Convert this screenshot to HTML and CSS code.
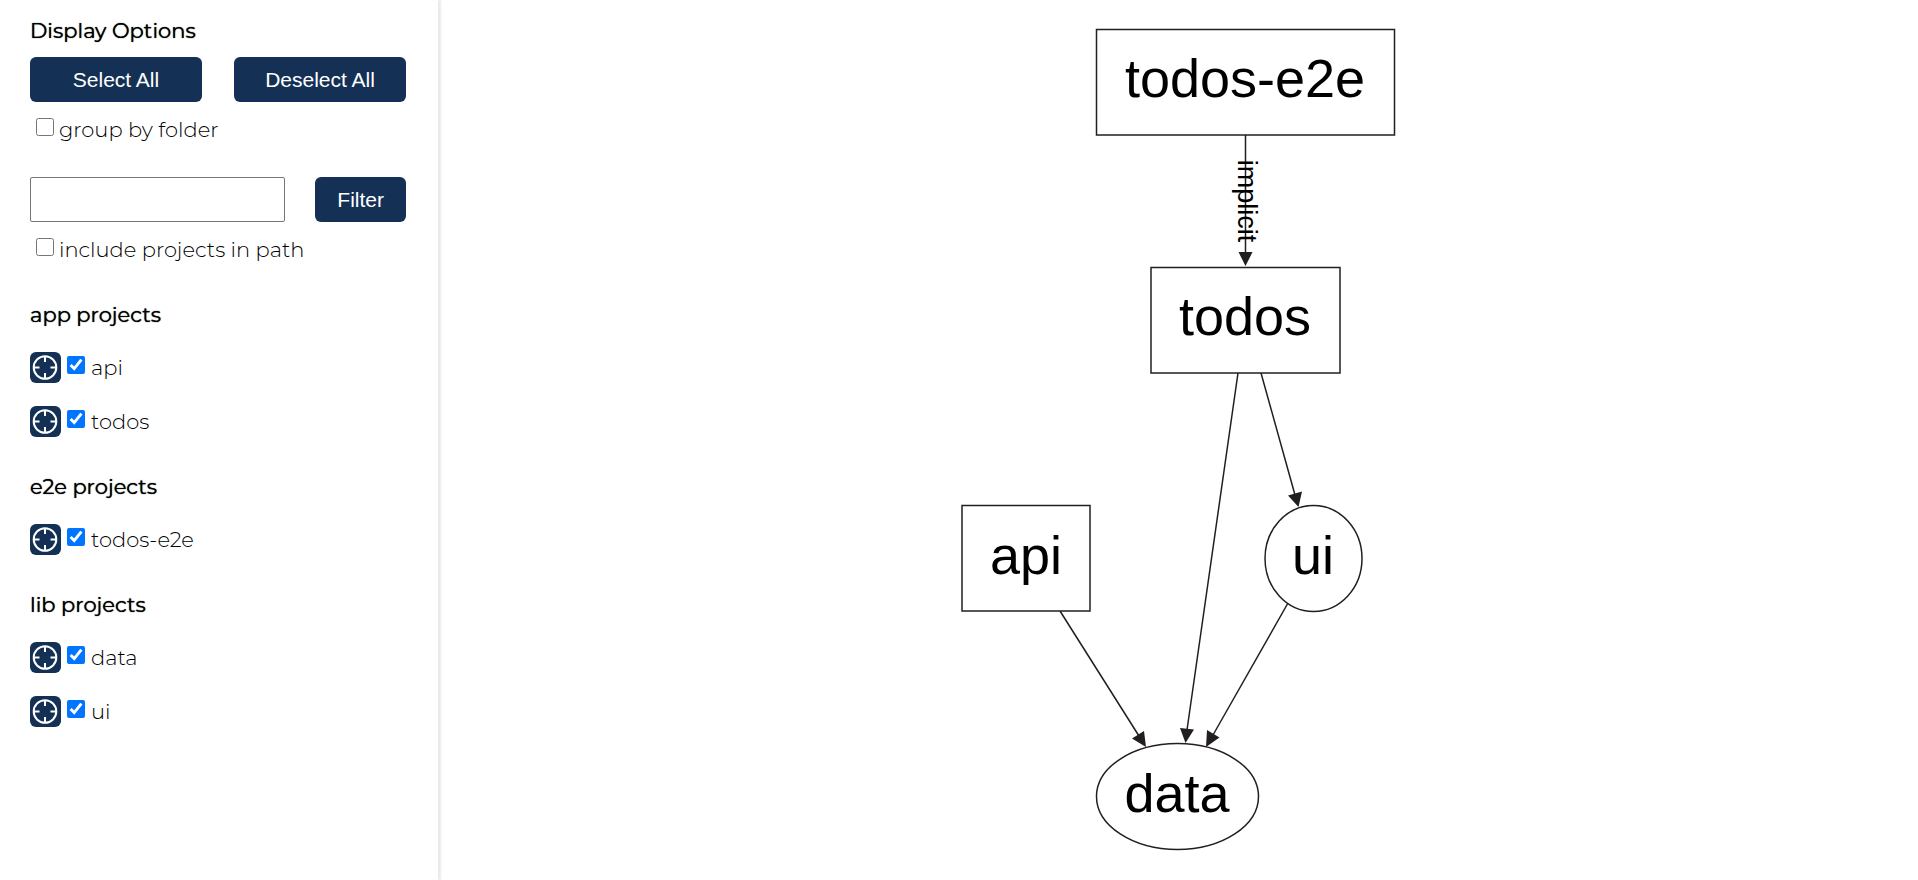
FILE: index.html
```html
<!DOCTYPE html>
<html lang="en">
<head>
<meta charset="utf-8">
<title>Project graph</title>
<link rel="stylesheet" href="styles.css">
</head>
<body>
<svg class="symbols" aria-hidden="true">
  <symbol id="focus" viewBox="0 0 31 31">
    <g fill="none" stroke="#fff" stroke-width="2">
      <circle cx="15" cy="15.5" r="11.3"/>
      <path d="M15 4v6M15 21v6M3.500 15.500h6M20.500 15.500h6"/>
    </g>
  </symbol>
</svg>
<div class="app">
  <aside class="sidebar">
    <section class="options">
      <h2 class="heading">Display Options</h2>
      <div class="button-row">
        <button class="button wide" type="button">Select All</button>
        <button class="button wide" type="button">Deselect All</button>
      </div>
      <label class="option"><input class="check" type="checkbox">group by folder</label>
    </section>
    <form class="filter">
      <div class="filter-row">
        <input class="filter-text" type="text" aria-label="Filter projects">
        <button class="button" type="button">Filter</button>
      </div>
      <label class="option"><input class="check" type="checkbox">include projects in path</label>
    </form>
    <section class="group">
      <h2 class="heading">app projects</h2>
      <ul class="projects">
        <li class="project"><button class="focus" type="button" aria-label="Focus api"><svg class="icon"><use href="#focus"/></svg></button><label class="name"><input class="check" type="checkbox" checked>api</label></li>
        <li class="project"><button class="focus" type="button" aria-label="Focus todos"><svg class="icon"><use href="#focus"/></svg></button><label class="name"><input class="check" type="checkbox" checked>todos</label></li>
      </ul>
    </section>
    <section class="group">
      <h2 class="heading">e2e projects</h2>
      <ul class="projects">
        <li class="project"><button class="focus" type="button" aria-label="Focus todos-e2e"><svg class="icon"><use href="#focus"/></svg></button><label class="name"><input class="check" type="checkbox" checked>todos-e2e</label></li>
      </ul>
    </section>
    <section class="group">
      <h2 class="heading">lib projects</h2>
      <ul class="projects">
        <li class="project"><button class="focus" type="button" aria-label="Focus data"><svg class="icon"><use href="#focus"/></svg></button><label class="name"><input class="check" type="checkbox" checked>data</label></li>
        <li class="project"><button class="focus" type="button" aria-label="Focus ui"><svg class="icon"><use href="#focus"/></svg></button><label class="name"><input class="check" type="checkbox" checked>ui</label></li>
      </ul>
    </section>
  </aside>
  <main class="canvas">
    <svg class="graph" viewBox="438 0 1480 880" role="img" aria-label="Dependency graph">
      <g class="edges">
        <path d="M1245.500 135V254M1238 373L1187 730M1261 373L1295 495M1060 611L1139 736M1288 603L1213 735"/>
      </g>
      <g class="arrows">
        <path d="M1238.500 252h14L1245.500 266zM1180 728L1194 729.500L1185.500 743zM1288 495.500L1302 491.500L1298.500 507zM1132 738.500L1144 731L1146 747zM1207 730L1219.500 737.500L1206 747z"/>
      </g>
      <g class="nodes">
        <rect x="1096.500" y="29.500" width="298" height="105.500"/>
        <rect x="1151" y="267.500" width="189" height="105.500"/>
        <rect x="962" y="505.500" width="128" height="105.500"/>
        <ellipse cx="1313.500" cy="558.500" rx="48.500" ry="53"/>
        <ellipse cx="1177.500" cy="796.500" rx="81" ry="53"/>
      </g>
      <g class="labels">
        <text x="1245" y="97">todos-e2e</text>
        <text x="1245" y="335">todos</text>
        <text x="1026" y="574">api</text>
        <text x="1313" y="574">ui</text>
        <text x="1177" y="812">data</text>
      </g>
      <text class="edge-label" transform="translate(1238 201) rotate(90)">implicit</text>
    </svg>
  </main>
</div>
</body>
</html>
```
FILE: styles.css
```css
* { box-sizing: border-box; }

body {
  margin: 0;
  background: #fff;
  color: #000;
  font-family: Montserrat, Inter, sans-serif;
  font-size: 21px;
  font-weight: 300;
  line-height: 24px;
}

.symbols { display: none; }

.app {
  display: flex;
  min-height: 100vh;
}

.sidebar {
  flex: none;
  width: 438px;
  padding: 19px 32px 19px 30px;
  box-shadow: 3px 0 2px rgba(51, 51, 51, 0.1);
}

.heading {
  margin: 0;
  font-size: 21px;
  font-weight: 400;
  text-shadow: 0 0 1px #000;
}

.button-row {
  display: flex;
  gap: 32px;
  margin: 14px 0 16px;
}

.filter { margin-top: 35px; }

.filter-row {
  display: flex;
  gap: 30px;
  margin-bottom: 16px;
}

.button {
  height: 45px;
  padding: 0 22px;
  border: 0;
  border-radius: 6px;
  background: #143055;
  color: #fff;
  font-family: "Liberation Sans", Arial, sans-serif;
  font-size: 21px;
}

.wide {
  flex: 1;
  padding: 0;
}

.filter-text {
  flex: 1;
  min-width: 0;
  height: 45px;
  padding: 0 8px;
  border: 1px solid #767676;
  border-radius: 2px;
  font: inherit;
}

.option {
  display: flex;
  align-items: center;
  gap: 5px;
  padding-left: 6px;
}

.check {
  flex: none;
  width: 18px;
  height: 18px;
  margin: 0 0 6px;
  accent-color: #0075ff;
}

.group { margin-top: 38px; }

.filter + .group { margin-top: 41px; }

.projects {
  display: flex;
  flex-direction: column;
  gap: 23px;
  margin: 25px 0 0;
  padding: 0;
  list-style: none;
}

.project {
  display: flex;
  align-items: center;
  gap: 6px;
}

.focus {
  flex: none;
  width: 31px;
  height: 31px;
  padding: 0;
  border: 0;
  border-radius: 6px;
  background: #143055;
}

.icon {
  display: block;
  width: 31px;
  height: 31px;
}

.name {
  display: flex;
  align-items: center;
  gap: 6px;
}

.canvas {
  flex: 1;
  min-width: 0;
}

.graph {
  display: block;
  width: 100%;
  height: auto;
}

.edges, .nodes {
  fill: none;
  stroke: #231f20;
  stroke-width: 1.5px;
}

.nodes { fill: #fff; }

.arrows { fill: #231f20; }

.labels, .edge-label {
  font-family: "Liberation Sans", Arial, sans-serif;
  font-weight: 400;
  text-anchor: middle;
}

.labels { font-size: 54px; }

.edge-label { font-size: 27px; }
```
